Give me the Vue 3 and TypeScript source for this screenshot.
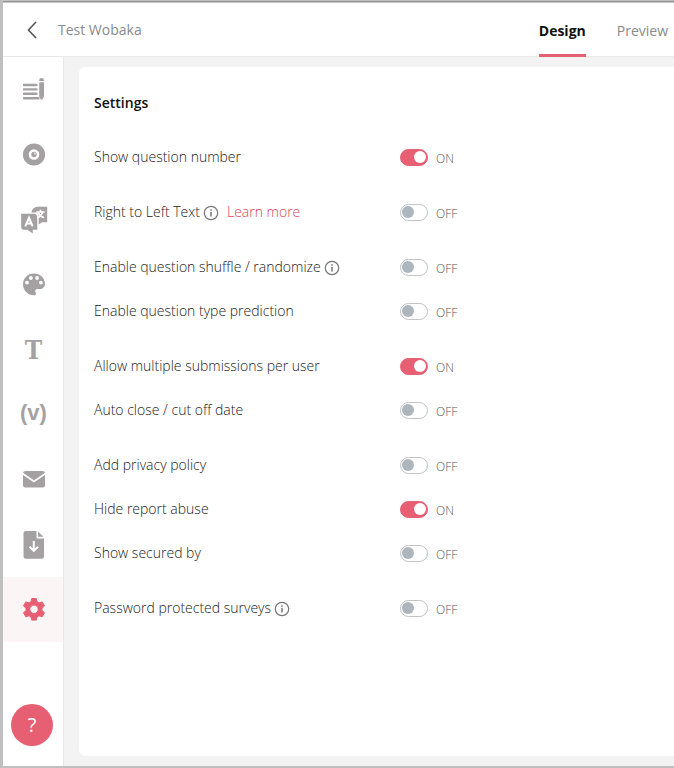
<script setup lang="ts">
import { ref } from 'vue'

interface Setting {
  id: string
  label: string
  on: boolean
  info?: boolean
  link?: string
}

const groups = ref<Setting[][]>([
  [{ id: 'number', label: 'Show question number', on: true }],
  [{ id: 'rtl', label: 'Right to Left Text', on: false, info: true, link: 'Learn more' }],
  [
    { id: 'shuffle', label: 'Enable question shuffle / randomize', on: false, info: true },
    { id: 'prediction', label: 'Enable question type prediction', on: false },
  ],
  [
    { id: 'multiple', label: 'Allow multiple submissions per user', on: true },
    { id: 'close', label: 'Auto close / cut off date', on: false },
  ],
  [
    { id: 'privacy', label: 'Add privacy policy', on: false },
    { id: 'abuse', label: 'Hide report abuse', on: true },
    { id: 'secured', label: 'Show secured by', on: false },
  ],
  [{ id: 'password', label: 'Password protected surveys', on: false, info: true }],
])

const sections = ['Questions', 'Focus', 'Translate', 'Theme', 'Text', 'Variables', 'Email', 'Export', 'Settings']
const active = ref('Settings')
</script>

<template>
  <div class="page">
    <header class="header">
      <button class="back" type="button" aria-label="Back">
        <svg width="10" height="18" viewBox="0 0 10 18"><path d="M9 1 1.5 9 9 17" fill="none" stroke="currentColor" stroke-width="1.6" /></svg>
      </button>
      <span class="title">Test Wobaka</span>
      <nav class="tabs">
        <a class="tab current" href="#design">Design</a>
        <a class="tab" href="#preview">Preview</a>
      </nav>
    </header>

    <div class="body">
      <aside class="sidebar">
        <button
          v-for="name in sections"
          :key="name"
          class="section"
          :class="{ active: active === name }"
          type="button"
          :aria-label="name"
          @click="active = name"
        >
          <span v-if="name === 'Text'" class="glyph serif">T</span>
          <span v-else-if="name === 'Variables'" class="glyph sans">(v)</span>
          <svg v-else width="28" height="28" viewBox="0 0 28 28" fill="currentColor">
            <g v-if="name === 'Questions'">
              <path d="M4 9h12.500M4 13.400h12.500M4 17.800h12.500M4 22.200h14.500" fill="none" stroke="currentColor" stroke-width="2.400" stroke-linecap="round" />
              <path d="M19.200 5V4.300a2.400 2.400 0 0 1 4.800 0V5zM19.200 6.200H24v14.300l-1.800 3.200h-1.200l-1.800-3.200z" />
            </g>
            <g v-else-if="name === 'Focus'">
              <circle cx="14" cy="13.500" r="8.200" fill="none" stroke="currentColor" stroke-width="5.800" />
              <circle cx="14" cy="13.500" r="2.700" /><path d="M14 13.500v-2.200a2.200 2.200 0 0 1 2.200 2.200z" fill="#fff" opacity=".6" />
            </g>
            <g v-else-if="name === 'Translate'">
              <path d="M11.500 6.500a6 6 0 0 1 6-5.700h9.700v15.400h-5L18.700 18.500V9.800a3.300 3.300 0 0 0-3.300-3.300z" />
              <path d="M1.200 7.700h12.300a3.800 3.800 0 0 1 3.800 3.800v12.200h-4.500v3.800L7.500 23.700H4a2.800 2.800 0 0 1-2.800-2.800z" />
              <path d="M5.300 20.300 9 11.800l3.700 8.500M6.600 17.500h4.800" fill="none" stroke="#fff" stroke-width="2" />
              <path d="M16.300 6h8.400M20.500 3.700V6M17.200 11.800c3-1 4.500-2.800 5.500-5.800M18.300 6.500c1 2.500 2.700 4.200 5.700 5.300" fill="none" stroke="#fff" stroke-width="1.700" />
            </g>
            <path v-else-if="name === 'Theme'" fill-rule="evenodd" d="M14 2.500C7.800 2.500 3 7.300 3 13.300c0 6 4.600 11 11 11 1.300 0 2-.8 2-1.800 0-.8-.8-1.300-.8-2.300 0-1.300.9-2.100 2.200-2.100h2.300c3 0 5.300-2.200 5.300-5.300C25 6.800 20 2.500 14 2.500ZM7 9.700a1.900 1.900 0 1 1 0 3.800 1.900 1.900 0 0 1 0-3.800ZM10.900 5.100a1.900 1.900 0 1 1 0 3.800 1.900 1.900 0 0 1 0-3.800ZM17.100 5.100a1.900 1.900 0 1 1 0 3.800 1.900 1.900 0 0 1 0-3.800ZM20.900 9.700a1.900 1.900 0 1 1 0 3.800 1.900 1.900 0 0 1 0-3.800Z" />
            <g v-else-if="name === 'Email'">
              <rect x="3" y="5" width="22" height="16.500" rx="2.500" />
              <path d="M2.500 7.500 14 15.400 25.500 7.500" fill="none" stroke="#fff" stroke-width="1.800" />
            </g>
            <g v-else-if="name === 'Export'">
              <path d="M6 0h10.500v7.500H24v17.800a2.500 2.500 0 0 1-2.500 2.500H6a2.500 2.500 0 0 1-2.500-2.500V2.500A2.500 2.500 0 0 1 6 0ZM18 .5l5.500 5.300H18z" />
              <path d="M13.800 10v9.500M9.600 15.700l4.200 4.200 4.200-4.200" fill="none" stroke="#fff" stroke-width="2" />
            </g>
            <path v-else fill-rule="evenodd" stroke="currentColor" stroke-linejoin="round" d="M11.700 2.500h4.600l.7 3.300 2 1.100 3.200-1 2.300 4-2.500 2.300v2.300l2.500 2.300-2.300 4-3.200-1-2 1.100-.7 3.200h-4.600l-.7-3.200-2-1.100-3.200 1-2.300-4L6 14.500v-2.300L3.500 9.900l2.300-4 3.200 1 2-1.100zM14 9.100a4.200 4.200 0 1 0 0 8.400 4.200 4.200 0 0 0 0-8.400Z" />
          </svg>
        </button>
        <button class="help" type="button" aria-label="Help">?</button>
      </aside>

      <main class="card">
        <h1 class="heading">Settings</h1>
        <div v-for="(group, i) in groups" :key="i" class="group">
          <div v-for="item in group" :key="item.id" class="row">
            <div class="name">
              <label :for="item.id">{{ item.label }}</label>
              <button v-if="item.info" class="info" type="button" aria-label="More information">
                <svg width="16" height="16" viewBox="0 0 16 16">
                  <circle cx="8" cy="8" r="6.700" fill="none" stroke="currentColor" stroke-width="1.200" />
                  <path d="M8 7v4.500M8 4.200v1.600" fill="none" stroke="currentColor" stroke-width="1.500" />
                </svg>
              </button>
              <a v-if="item.link" class="more" href="#learn">{{ item.link }}</a>
            </div>
            <input :id="item.id" v-model="item.on" class="switch" type="checkbox" role="switch" />
            <span class="state">{{ item.on ? 'ON' : 'OFF' }}</span>
          </div>
        </div>
      </main>
    </div>
  </div>
</template>

<style>
body {
  margin: 0;
}
</style>

<style scoped>
.page {
  box-sizing: border-box;
  display: flex;
  flex-direction: column;
  min-height: 100vh;
  border: solid #bfbfbf;
  border-width: 1px 0 2px 3px;
  background: #f3f3f3;
  color: #222;
  font: 300 14px/20px "Open Sans", "Noto Sans", sans-serif;
}
button {
  padding: 0;
  border: 0;
  background: none;
  color: inherit;
  font: inherit;
  cursor: pointer;
}
a {
  text-decoration: none;
}
.header {
  display: flex;
  align-items: stretch;
  height: 52px;
  padding: 2px 6px 0 24px;
  border-top: 1px solid #969696;
  border-bottom: 1px solid #e8e8e8;
  background: #fff;
  box-shadow: inset 0 1px #c4c4c4;
}
.back {
  display: flex;
  align-items: center;
  color: #555;
}
.title {
  align-self: center;
  margin-left: 21px;
  color: #8a8a8a;
  font-weight: 400;
}
.tabs {
  display: flex;
  gap: 31px;
  margin-left: auto;
}
.tab {
  display: flex;
  align-items: center;
  margin-bottom: -1px;
  color: #8a8a8a;
  font-weight: 500;
}
.tab.current {
  box-shadow: inset 0 -3px #e65f73;
  color: #111;
  font-weight: 700;
}
.body {
  display: flex;
  flex: 1;
}
.sidebar {
  display: flex;
  flex-direction: column;
  width: 60px;
  border-right: 1px solid #e8e8e8;
  background: #fff;
  color: #a5a1a2;
}
.section {
  display: flex;
  align-items: center;
  justify-content: center;
  height: 65px;
  padding-left: 1px;
}
.section.active {
  background: #fcf5f5;
  color: #e65f73;
}
.glyph {
  font-weight: 700;
  line-height: 32px;
}
.serif {
  font-family: "DejaVu Serif Condensed", "DejaVu Serif", serif;
  font-size: 26px;
}
.sans {
  padding-bottom: 4px;
  font-family: "Liberation Sans", sans-serif;
  font-size: 22px;
}
.help {
  width: 42px;
  height: 42px;
  margin: auto 0 20px 8px;
  border-radius: 50%;
  background: #e65f73;
  color: #fff;
  font-size: 20px;
  font-weight: 400;
}
.card {
  flex: 1;
  margin: 10px 0 10px 15px;
  padding: 26px 15px;
  border-radius: 6px 0 0 6px;
  background: #fff;
}
.heading {
  margin: 0 0 22px;
  color: #111;
  font-size: 14px;
  font-weight: 600;
  line-height: 20px;
}
.group {
  margin-bottom: 11px;
}
.row {
  display: grid;
  grid-template-columns: 306px 28px 1fr;
  align-items: center;
  height: 44px;
}
.name {
  display: flex;
  align-items: center;
}
.info {
  display: flex;
  margin: 2px 0 0 3px;
  color: #777;
}
.more {
  margin-left: 8px;
  color: #e0405a;
}
.switch {
  appearance: none;
  display: flex;
  align-items: center;
  box-sizing: border-box;
  width: 28px;
  height: 17px;
  margin: 0;
  padding: 0 1px;
  border: 1px solid #bfc3c6;
  border-radius: 9px;
}
.switch::before {
  content: "";
  width: 12px;
  height: 12px;
  border-radius: 50%;
  background: #adb5bd;
}
.switch:checked {
  justify-content: flex-end;
  border-color: #e65f73;
  background: #e65f73;
}
.switch:checked::before {
  background: #fff;
}
.state {
  margin: 4px 0 0 8px;
  color: #555;
  font-size: 12px;
}
</style>
